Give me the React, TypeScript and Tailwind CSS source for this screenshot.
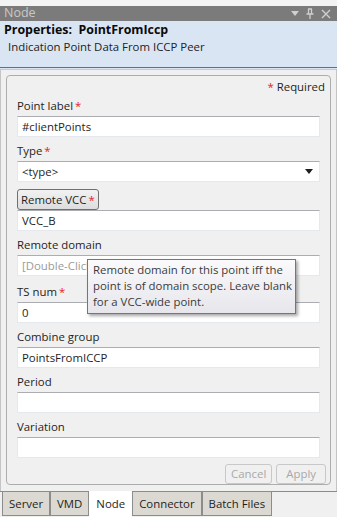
import React from 'react';

const font = { fontFamily: '"Segoe UI", "Open Sans", "Noto Sans", sans-serif' };

function Star() {
  return <span className="text-[#e8202a] ml-[2px]">*</span>;
}

function Field({ label, req, value, placeholder }: { label: string; req?: boolean; value?: string; placeholder?: string }) {
  return (
    <div className="flex flex-col">
      <div className="h-[20px] leading-[20px] text-[#1e1e1e]">
        {label}
        {req && <Star />}
      </div>
      <TextBox value={value} placeholder={placeholder} />
    </div>
  );
}

function TextBox({ value, placeholder, arrow }: { value?: string; placeholder?: string; arrow?: boolean }) {
  return (
    <div className="h-[21px] bg-white border border-[#e3e9ef] border-t-[#abadb3] flex items-center px-[4px] text-[#1e1e1e]">
      <span className={placeholder ? 'text-[#9a9a9a]' : ''}>{value ?? placeholder}</span>
      {arrow && (
        <svg className="ml-auto mr-[2px]" width="8" height="5" viewBox="0 0 8 5">
          <path d="M0 0h8L4 5z" fill="#1e1e1e" />
        </svg>
      )}
    </div>
  );
}

export default function App() {
  return (
    <div className="w-[337px] h-[517px] bg-[#f0f0f0] flex flex-col text-[11.4px] overflow-hidden" style={font}>
      <div className="h-[6px] bg-[#f3f3f3]" />
      <div className="h-[16px] bg-[#7b7b7b] flex items-center px-[4px] text-[#c9c9c9] text-[12.5px] leading-none">
        <span>Node</span>
        <div className="ml-auto flex items-center gap-[7px] pr-[2px]">
          <svg width="8" height="5" viewBox="0 0 8 5"><path d="M0 0h8L4 5z" fill="#cfcfcf" /></svg>
          <svg width="8" height="11" viewBox="0 0 8 11">
            <path d="M2 1h4M2.5 1v5M5.5 1v5M0.5 6h7M4 6v5" stroke="#cfcfcf" strokeWidth="1.3" fill="none" />
          </svg>
          <svg width="10" height="10" viewBox="0 0 10 10">
            <path d="M1 1l8 8M9 1l-8 8" stroke="#cfcfcf" strokeWidth="1.4" />
          </svg>
        </div>
      </div>
      <div className="h-[47px] bg-[#dae5f3] px-[4px] pt-[1px] text-[#0a0a0a]">
        <div className="font-bold text-[12.4px] leading-[16px]">Properties:&nbsp; PointFromIccp</div>
        <div className="pl-[4px] leading-[18px] text-[#222]">Indication Point Data From ICCP Peer</div>
      </div>
      <div className="h-[3px] bg-[#dae5f3] border-t border-[#6d6d6d] border-b border-b-[#c9c9c9]" />
      <div className="flex-1 px-[5px] pt-[5px] pb-[6px] border-x border-[#c4c4c4] flex flex-col">
        <div className="flex-1 border border-[#adadad] rounded-[4px] bg-[#f0f0f0] px-[10px] pt-[2px] flex flex-col">
          <div className="text-right mr-[-5px] h-[18px] leading-[18px] text-[#1e1e1e]">
            <span className="text-[#e8202a]">*</span> Required
          </div>
          <div className="flex flex-col gap-[4px]">
            <Field label="Point label" req value="#clientPoints" />
            <div className="flex flex-col">
              <div className="h-[20px] leading-[20px] text-[#1e1e1e]">Type<Star /></div>
              <TextBox value="<type>" arrow />
            </div>
            <div className="flex flex-col mt-[3px]">
              <div className="self-start h-[21px] px-[3px] flex items-center rounded-[3px] border border-[#707070] bg-gradient-to-b from-[#f2f2f2] to-[#dddddd] text-[#1e1e1e]">
                Remote VCC<Star />
              </div>
              <TextBox value="VCC_B" />
            </div>
            <Field label="Remote domain" placeholder="[Double-Click to Edit]" />
            <div className="relative mt-[2px]">
              <Field label="TS num" req value="0" />
              <div className="absolute left-[70px] top-[-23px] w-[209px] border border-[#767676] bg-gradient-to-b from-[#fafafc] to-[#e6e6ec] px-[5px] pt-[2px] pb-[3px] text-[#3b3b3b] leading-[16px] whitespace-nowrap shadow-[2px_2px_3px_rgba(0,0,0,0.35)]">
                Remote domain for this point iff the
                <br />
                point is of domain scope. Leave blank
                <br />
                for a VCC-wide point.
              </div>
            </div>
            <Field label="Combine group" value="PointsFromICCP" />
            <Field label="Period" value="" />
            <Field label="Variation" value="" />
          </div>
          <div className="flex justify-end gap-[4px] mt-[6px] mr-[-6px]">
            <div className="h-[20px] px-[5px] flex items-center rounded-[3px] border border-[#c8c8c8] text-[#a8a8a8]">Cancel</div>
            <div className="h-[20px] px-[9px] flex items-center rounded-[3px] border border-[#c8c8c8] text-[#a8a8a8]">Apply</div>
          </div>
        </div>
      </div>
      <div className="h-[27px] border-t border-[#8c8c8c] bg-[#f0f0f0] flex items-start pl-[2px]">
        {['Server', 'VMD', 'Node', 'Connector', 'Batch Files'].map(t =>
          t === 'Node' ? (
            <div key={t} className="h-[26px] mt-[-1px] px-[7px] bg-white flex items-center text-[#1e1e1e]">{t}</div>
          ) : (
            <div key={t} className="h-[24px] px-[6px] bg-[#dcd9d2] border border-t-0 border-[#8c8c8c] flex items-center text-[#1e1e1e]">{t}</div>
          )
        )}
      </div>
    </div>
  );
}
